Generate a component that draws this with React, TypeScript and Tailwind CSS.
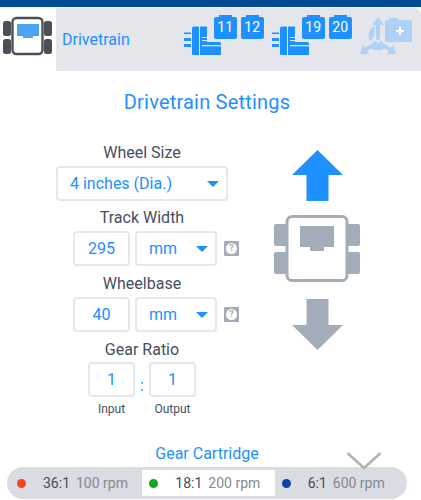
const FONT = "font-['Roboto',sans-serif]"

function DriveIcon() {
  return (
    <svg width="50" height="44" viewBox="0 0 50 44">
      <rect x="0" y="5" width="8" height="15" rx="2.5" fill="#4b5058" />
      <rect x="0" y="23" width="8" height="15" rx="2.5" fill="#4b5058" />
      <rect x="41" y="5" width="8" height="15" rx="2.5" fill="#4b5058" />
      <rect x="41" y="23" width="8" height="15" rx="2.5" fill="#4b5058" />
      <rect x="9.5" y="2" width="30" height="36" rx="4" fill="#fff" stroke="#4b5058" strokeWidth="2.4" />
      <path d="M14 8h22v12h-6v2h-10v-2h-6z" fill="#4aa3f5" />
    </svg>
  )
}

function MotorIcon() {
  return (
    <svg width="37" height="29" viewBox="0 0 37 29" fill="#1e90ff">
      <path d="M0 6.5h7v1.5H0zM0 12h7v3H0zM0 18h7v3H0z" />
      <path d="M8 2.5a2 2 0 0 1 2-2h5v29h-5a2 2 0 0 1-2-2z" />
      <path d="M16 .5h7v15.500h12.500a1.500 1.500 0 0 1 1.500 1.500v10.500a1.500 1.500 0 0 1-1.500 1.500H16z" />
      <path d="M18 11h5v1h-5zM18 14h7v1h-7zM18 19h19v1.200H18z" fill="#e5e6eb" />
    </svg>
  )
}

function Port({ n }: { n: string }) {
  return (
    <div className="relative flex h-[22px] w-[23px] items-center justify-center rounded-[2px] bg-[#1e90ff] text-[14px] text-white">
      <div className="absolute left-[5px] top-[-2px] h-[3px] w-[13px] bg-[#1e90ff]" />
      {n}
    </div>
  )
}

function MotorGroup({ a, b }: { a: string; b: string }) {
  return (
    <div className="flex items-start">
      <div className="mt-[9px]">
        <MotorIcon />
      </div>
      <div className="ml-[-7px] flex gap-[4px]">
        <Port n={a} />
        <Port n={b} />
      </div>
    </div>
  )
}

function AddIcon() {
  return (
    <svg width="52" height="38" viewBox="0 0 52 38" fill="#aed2f5">
      <path d="M18 0l6 8h-4v14l-2 1.500-2-1.500V8h-4z" />
      <path d="M0 37l3-9 2 3 11-7 2 3-11 7 2 3zM36 37l-3-9-2 3-11-7-2 3 11 7-2 3z" />
      <path d="M15 9l-1 11-4 4c-3-5-1-12 5-15zM11 31l7-4 7 4c-4 3-10 3-14 0z" />
      <path d="M25 3h4V1h9v2h13a1 1 0 0 1 1 1v20a1 1 0 0 1-1 1H25z" />
      <path d="M36 13h3v-3h2v3h3v2h-3v3h-2v-3h-3z" fill="#fff" />
    </svg>
  )
}

function Caret() {
  return (
    <svg width="12" height="6" viewBox="0 0 12 6" className="shrink-0">
      <path d="M0 0h12L6 6z" fill="#1e90ff" />
    </svg>
  )
}

function Help() {
  return (
    <div className="flex h-[15px] w-[15px] items-center justify-center rounded-[1px] bg-[#a3acb9]">
      <div className="flex h-[11px] w-[11px] items-center justify-center rounded-full bg-white text-[9px] font-bold leading-none text-[#a3acb9]">
        ?
      </div>
    </div>
  )
}

function Box({ value, className }: { value: string; className: string }) {
  return (
    <div className={`flex h-[35px] items-center justify-center rounded-[4px] border-2 border-[#e5e7ef] text-[16px] text-[#1e90ff] ${className}`}>
      {value}
    </div>
  )
}

function Unit() {
  return (
    <div className="flex h-[35px] w-[82px] items-center justify-between rounded-[4px] border-2 border-[#e5e7ef] pl-[12px] pr-[7px] text-[16px] text-[#1e90ff]">
      mm
      <Caret />
    </div>
  )
}

function Label({ text }: { text: string }) {
  return <div className="h-[19px] text-center text-[16px] leading-[19px] text-[#444f5e]">{text}</div>
}

function MeasureRow({ value }: { value: string }) {
  return (
    <div className="mt-[4px] flex items-center">
      <Box value={value} className="w-[57px]" />
      <div className="ml-[5px]">
        <Unit />
      </div>
      <div className="ml-[7px]">
        <Help />
      </div>
    </div>
  )
}

function Robot() {
  return (
    <svg width="86" height="68" viewBox="0 0 86 68" fill="#a3acb9">
      <rect x="0" y="9" width="13" height="22" rx="2" />
      <rect x="0" y="37" width="13" height="22" rx="2" />
      <rect x="73" y="9" width="13" height="22" rx="2" />
      <rect x="73" y="37" width="13" height="22" rx="2" />
      <rect x="13" y="1.500" width="60" height="64" rx="5" fill="#fff" stroke="#a3acb9" strokeWidth="3" />
      <path d="M26 11h34v21H50v4H36v-4H26z" />
    </svg>
  )
}

function Cartridge({ color, ratio, rpm, active }: { color: string; ratio: string; rpm: string; active?: boolean }) {
  return (
    <div className={`flex h-[26px] w-[134px] items-center text-[14px] ${active ? 'bg-white' : ''}`}>
      <div className={`ml-[7px] h-[9px] w-[9px] rounded-full ${color}`} />
      <span className="ml-[17px] text-[#444f5e]">{ratio}</span>
      <span className="ml-[6px] text-[#85898f]">{rpm}</span>
    </div>
  )
}

export default function App() {
  return (
    <div className={`${FONT} relative h-[500px] w-[421px] overflow-hidden bg-white`}>
      <div className="h-[7px] bg-[#004b91]" />
      <div className="h-[1px] bg-[#f4f4f6]" />

      {/* Header */}
      <div className="flex h-[63px]">
        <div className="flex w-[56px] items-center justify-center pb-[3px]">
          <DriveIcon />
        </div>
        <div className="flex flex-1 items-center rounded-tr-[6px] bg-[#e5e6eb]">
          <span className="ml-[6px] text-[16px] text-[#1e90ff]">Drivetrain</span>
          <div className="ml-[54px] mt-[-8px] flex gap-[8px]">
            <MotorGroup a="11" b="12" />
            <MotorGroup a="19" b="20" />
          </div>
          <div className="ml-[8px] mt-[-7px]">
            <AddIcon />
          </div>
        </div>
      </div>

      <h1 className="mt-[19px] text-center text-[20px] font-normal leading-[24px] tracking-[0.2px] text-[#1e90ff] pr-[7px]">
        Drivetrain Settings
      </h1>

      {/* Settings */}
      <div className="mt-[29px] flex">
        <div className="ml-[56px] flex w-[183px] flex-col">
          <div className="w-[172px]">
            <Label text="Wheel Size" />
            <div className="mt-[4px] flex h-[35px] items-center justify-between rounded-[4px] border-2 border-[#e5e7ef] pl-[12px] pr-[7px] text-[16px] text-[#1e90ff]">
              4 inches (Dia.)
              <Caret />
            </div>
          </div>

          <div className="mt-[7px] w-[172px]">
            <Label text="Track Width" />
          </div>
          <div className="ml-[17px]">
            <MeasureRow value="295" />
          </div>

          <div className="mt-[8px] w-[172px]">
            <Label text="Wheelbase" />
          </div>
          <div className="ml-[17px]">
            <MeasureRow value="40" />
          </div>

          <div className="mt-[8px] w-[172px]">
            <Label text="Gear Ratio" />
          </div>
          <div className="ml-[32px] mt-[3px] flex">
            <div className="flex w-[47px] flex-col items-center">
              <Box value="1" className="w-[47px]" />
              <span className="mt-[5px] text-[12px] leading-[14px] text-[#444f5e]">Input</span>
            </div>
            <span className="mt-[12px] w-[14px] text-center text-[16px] text-[#1e90ff]">:</span>
            <div className="flex w-[47px] flex-col items-center">
              <Box value="1" className="w-[47px]" />
              <span className="mt-[5px] text-[12px] leading-[14px] text-[#444f5e]">Output</span>
            </div>
          </div>
        </div>

        {/* Direction */}
        <div className="ml-[35px] mt-[7px] flex w-[86px] flex-col items-center">
          <svg width="51" height="51" viewBox="0 0 51 51">
            <path d="M25.500 0L51 25H36.500v26h-22V25H0z" fill="#1e90ff" />
          </svg>
          <div className="mt-[14px]">
            <Robot />
          </div>
          <svg width="51" height="51" viewBox="0 0 51 51" className="mt-[16px]">
            <path d="M25.500 51L51 26H36.500V0h-22v26H0z" fill="#a3acb9" />
          </svg>
        </div>
      </div>

      <div className="absolute bottom-[37px] left-0 w-[414px] text-center text-[16px] leading-[19px] text-[#1e90ff]">
        Gear Cartridge
      </div>

      {/* Cartridge selector */}
      <div className="absolute bottom-[1px] left-[7px] flex h-[32px] w-[400px] items-center rounded-full bg-[#d9dce2] pl-[3px]">
        <Cartridge color="bg-[#fb4420]" ratio="36:1" rpm="100 rpm" />
        <Cartridge color="bg-[#14a51e]" ratio="18:1" rpm="200 rpm" active />
        <Cartridge color="bg-[#0f41a8]" ratio="6:1" rpm="600 rpm" />
      </div>

      {/* Scroll hint */}
      <svg width="36" height="20" viewBox="0 0 36 20" className="absolute left-[346px] top-[451px]">
        <path d="M1.500 2L18 17 34.500 2" fill="none" stroke="#b0b2b4" strokeWidth="2.500" />
      </svg>
    </div>
  )
}
